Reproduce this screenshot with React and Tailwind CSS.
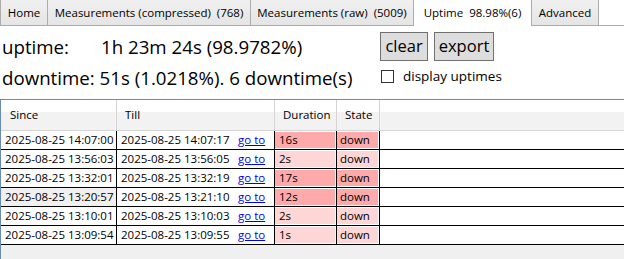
import React from "react";

const rows = [
  ["2025-08-25 14:07:00", "2025-08-25 14:07:17", "16s", true, false],
  ["2025-08-25 13:56:03", "2025-08-25 13:56:05", "2s", false, false],
  ["2025-08-25 13:32:01", "2025-08-25 13:32:19", "17s", true, false],
  ["2025-08-25 13:20:57", "2025-08-25 13:21:10", "12s", true, true],
  ["2025-08-25 13:10:01", "2025-08-25 13:10:03", "2s", false, false],
  ["2025-08-25 13:09:54", "2025-08-25 13:09:55", "1s", false, false],
];

const tabs = [
  ["Home", "w-[47px]", false],
  ["Measurements (compressed)  (768)", "w-[203px]", false],
  ["Measurements (raw)  (5009)", "w-[163px]", false],
  ["Uptime  98.98%(6)", "w-[118px]", true],
  ["Advanced", "w-[68px]", false],
];

export default function App() {
  return (
    <div
      className="w-[624px] h-[259px] overflow-hidden bg-white text-black flex flex-col"
      style={{ fontFamily: "'Segoe UI', 'Open Sans', sans-serif" }}
    >
      {/* Tab strip */}
      <div className="h-[26px] flex items-stretch border-b border-[#acacac]">
        {tabs.map(([label, w, sel], i) => (
          <div
            key={i}
            className={
              (sel
                ? "bg-white -mb-px "
                : "bg-gradient-to-b from-[#f0f0f0] to-[#e5e5e5] ") +
              w +
              " border-l border-[#acacac] " +
              (i === tabs.length - 1 ? "border-r " : "") +
              "flex items-center justify-center text-[11.5px] whitespace-pre leading-none"
            }
          >
            {label}
          </div>
        ))}
        <div className="flex-1" />
      </div>

      {/* Summary */}
      <div className="h-[73px] flex">
        <div className="w-[380px] flex flex-col pt-[6px] text-[18.7px] leading-none">
          <div className="h-[30px] flex items-center pl-[2px]">
            <span className="w-[99px]">uptime:</span>
            <span>1h 23m 24s (98.9782%)</span>
          </div>
          <div className="h-[32px] flex items-center pl-[2px]">
            downtime: 51s (1.0218%). 6 downtime(s)
          </div>
        </div>
        <div className="flex flex-col pt-[6px]">
          <div className="flex gap-[6px]">
            <div className="h-[29px] w-[48px] bg-[#dddddd] border border-[#707070] flex items-center justify-center text-[16.5px] leading-none">
              clear
            </div>
            <div className="h-[29px] w-[60px] bg-[#dddddd] border border-[#707070] flex items-center justify-center text-[16.5px] leading-none">
              export
            </div>
          </div>
          <div className="flex items-center mt-[9px] ml-[1px]">
            <div className="w-[13px] h-[13px] border border-[#333333] bg-white" />
            <span className="ml-[9px] text-[13.5px] leading-none">display uptimes</span>
          </div>
        </div>
      </div>

      {/* Data grid */}
      <div className="flex-1 flex flex-col border-t border-l border-[#688caf] bg-[#f0f0f0]">
        <div className="h-[31px] flex border-b border-[#d5d5d5] bg-gradient-to-b from-white from-40% to-[#f2f2f2] to-40% text-[11.5px]">
          <div className="w-[116px] border-r border-[#d5d5d5] flex items-center pl-[9px]">Since</div>
          <div className="w-[158px] border-r border-[#d5d5d5] flex items-center pl-[8px]">Till</div>
          <div className="w-[62px] border-r border-[#d5d5d5] flex items-center pl-[8px]">Duration</div>
          <div className="w-[43px] border-r border-[#d5d5d5] flex items-center pl-[8px]">State</div>
          <div className="flex-1" />
        </div>
        {rows.map(([since, till, dur, dark, grayCell], i) => (
          <div key={i} className="h-[19px] flex border-b border-black bg-white text-[11.5px] leading-none">
            <div
              className={
                "w-[116px] border-r border-black flex items-center pl-[4px] " +
                (grayCell ? "bg-[#f0f0f0]" : "")
              }
            >
              {since}
            </div>
            <div className="w-[158px] border-r border-black flex items-center pl-[4px]">
              <span className="w-[117px]">{till}</span>
              <span className="text-[#0000ff] underline">go to</span>
            </div>
            <div className="w-[62px] border-r border-black flex py-px pr-px">
              <div className={"flex-1 flex items-center pl-[4px] " + (dark ? "bg-[#ffaaaa]" : "bg-[#ffd6d6]")}>
                {dur}
              </div>
            </div>
            <div className="w-[43px] border-r border-black flex py-px pr-px">
              <div className={"flex-1 flex items-center pl-[3px] " + (dark ? "bg-[#ffaaaa]" : "bg-[#ffd6d6]")}>
                down
              </div>
            </div>
            <div className="flex-1" />
          </div>
        ))}
      </div>
    </div>
  );
}
